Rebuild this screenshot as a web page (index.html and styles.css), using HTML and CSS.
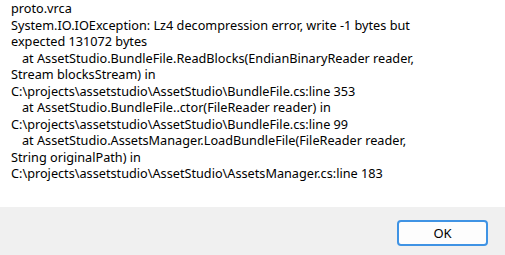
FILE: index.html
```html
<!DOCTYPE html>
<html>
<head>
<meta charset="utf-8">
<link rel="stylesheet" href="styles.css">
</head>
<body>
<div class="dialog">
  <div class="content">
    <div class="line">proto.vrca</div>
    <div class="line">System.IO.IOException: Lz4 decompression error, write -1 bytes but</div>
    <div class="line">expected 131072 bytes</div>
    <div class="line indent">at AssetStudio.BundleFile.ReadBlocks(EndianBinaryReader reader,</div>
    <div class="line">Stream blocksStream) in</div>
    <div class="line">C:\projects\assetstudio\AssetStudio\BundleFile.cs:line 353</div>
    <div class="line indent">at AssetStudio.BundleFile..ctor(FileReader reader) in</div>
    <div class="line">C:\projects\assetstudio\AssetStudio\BundleFile.cs:line 99</div>
    <div class="line indent">at AssetStudio.AssetsManager.LoadBundleFile(FileReader reader,</div>
    <div class="line">String originalPath) in</div>
    <div class="line">C:\projects\assetstudio\AssetStudio\AssetsManager.cs:line 183</div>
  </div>
  <div class="footer">
    <button class="btn">OK</button>
  </div>
</div>
</body>
</html>
```
FILE: styles.css
```css
html, body {
  margin: 0;
  padding: 0;
  background: #ffffff;
}
.dialog {
  width: 505px;
  height: 255px;
  display: flex;
  flex-direction: column;
  font-family: "Noto Sans", "Open Sans", sans-serif;
  font-size: 12.7px;
  color: #000000;
}
.content {
  height: 207px;
  box-sizing: border-box;
  padding: 0 0 0 11px;
  background: #ffffff;
}
.line {
  line-height: 16.5px;
  white-space: nowrap;
}
.indent {
  padding-left: 11px;
}
.footer {
  flex: 1;
  background: #f0f0f0;
  display: flex;
  justify-content: flex-end;
  align-items: flex-start;
  padding: 13px 17px 0 0;
}
.btn {
  width: 91px;
  height: 26px;
  box-sizing: border-box;
  border: 2px solid #3f93e4;
  border-radius: 4px;
  background: #fdfdfd;
  font-family: "Noto Sans", "Open Sans", sans-serif;
  font-size: 13px;
  color: #000000;
  padding: 0;
  line-height: 20px;
}
```
